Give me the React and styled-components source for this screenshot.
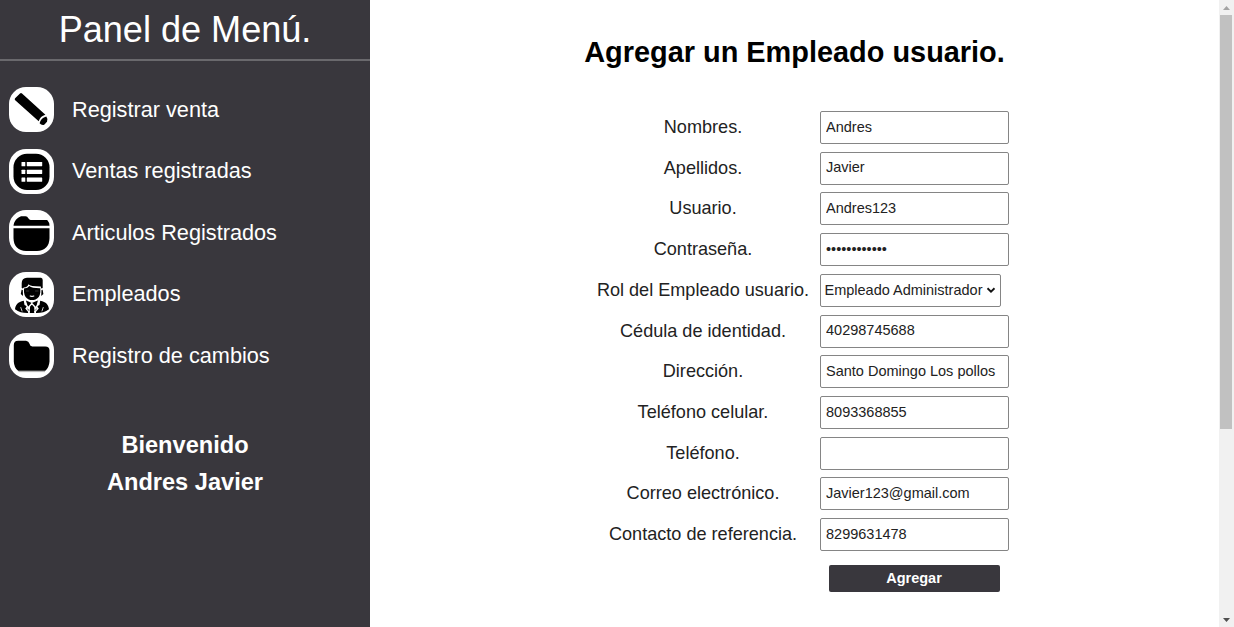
import React from "react";
import styled, { createGlobalStyle } from "styled-components";

const GlobalStyle = createGlobalStyle`
  *, *::before, *::after { box-sizing: border-box; }
  body {
    margin: 0;
    overflow: hidden;
    background: #fff;
    font-family: "Liberation Sans", Arial, sans-serif;
  }
`;

const Page = styled.div`
  display: flex;
  height: 627px;
  overflow: hidden;
`;

const Sidebar = styled.aside`
  flex: 0 0 370px;
  background: #39373d;
  color: #fff;
`;

const PanelTitle = styled.h1`
  display: flex;
  align-items: center;
  justify-content: center;
  height: 61px;
  margin: 0;
  padding-bottom: 0;
  border-bottom: 2px solid #6a696d;
  font-size: 36.1px;
  font-weight: 400;
  white-space: nowrap;
`;

const Menu = styled.nav`
  display: flex;
  flex-direction: column;
  gap: 16.5px;
  padding: 26px 0 0 9px;
`;

const MenuItem = styled.a`
  display: flex;
  align-items: center;
  gap: 18px;
  height: 45px;
  font-size: 21.7px;
  white-space: nowrap;
`;

const IconTile = styled.span`
  flex: 0 0 45px;
  height: 45px;
  border-radius: 17px;
  background: #fff;
  overflow: hidden;

  svg { display: block; width: 45px; height: 45px; }
`;

const Welcome = styled.div`
  margin-top: 49px;
  font-size: 23.6px;
  font-weight: 700;
  line-height: 37px;
  text-align: center;
`;

const Main = styled.main`
  flex: 1;
  display: flex;
  flex-direction: column;
  align-items: center;
  color: #000;
`;

const Heading = styled.h2`
  margin: 34px 0 0;
  font-size: 28.9px;
  line-height: 36px;
  white-space: nowrap;
`;

const Form = styled.form`
  display: grid;
  grid-template-columns: 218px 189px;
  grid-auto-rows: 32.5px;
  column-gap: 8px;
  row-gap: 8.22px;
  margin: 41px 0 0 13px;
`;

const Label = styled.label`
  align-self: center;
  padding: 0.4px 0 0 1px;
  color: #222;
  font-size: 18.1px;
  text-align: center;
  white-space: nowrap;
`;

const Input = styled.input`
  width: 189px;
  height: 33px;
  margin: 0;
  padding: 0 5px 2px 5.5px;
  border: 1px solid #858585;
  border-radius: 2px;
  outline: none;
  background: #fff;
  color: #222;
  font: 14.5px "Liberation Sans", Arial, sans-serif;
`;

const SelectBox = styled.div`
  display: flex;
  align-items: center;
  justify-content: space-between;
  width: 181px;
  height: 33px;
  padding: 0 4px;
  border: 1px solid #858585;
  border-radius: 2px;
  color: #222;
  font-size: 14.5px;
  white-space: nowrap;
`;

const Submit = styled.button`
  grid-column: 2;
  justify-self: center;
  width: 171px;
  height: 27px;
  margin-top: 5.8px;
  padding: 0;
  border: 0;
  border-radius: 2px;
  background: #39373d;
  color: #fff;
  font: 700 14.5px "Liberation Sans", Arial, sans-serif;
`;

const ScrollTrack = styled.div`
  flex: 0 0 15px;
  display: flex;
  flex-direction: column;
  align-items: center;
  background: #f1f1f1;
`;

const Arrow = styled.svg`
  width: 15px;
  height: 15px;
  fill: ${(p) => p.$color};
`;

const ScrollThumb = styled.div`
  width: 12px;
  height: 414px;
  margin: 0 1px auto 0;
  background: #c1c1c1;
`;

const Pencil = () => (
  <svg viewBox="0 0 45 45">
    <path d="M6.1 11.2 L11 6.5 Q12 5.7 13 6.5 L36.4 27.8 Q31.2 29.2 29.7 34.2 L6.2 13.2 Q5.2 12.2 6.1 11.2Z" />
    <path d="M37.3 29.6 Q39.2 32 38 34.7 L35.2 37.7 Q32.6 38.6 30.6 36.2 Q32 31 37.3 29.6Z" />
  </svg>
);

const List = () => (
  <svg viewBox="0 0 45 45">
    <rect x="4.5" y="4.7" width="36" height="36.3" rx="13.5" />
    <g fill="#fff">
      {[13, 20.7, 28.5].map((y) => (
        <React.Fragment key={y}>
          <rect x="12.5" y={y} width="3.8" height="4.2" rx="0.5" />
          <rect x="17.8" y={y} width="15.4" height="4.2" rx="0.4" />
        </React.Fragment>
      ))}
    </g>
  </svg>
);

const OpenFolder = () => (
  <svg viewBox="0 0 45 45">
    <path d="M4.5 15.8 C5 11.2 8 7.6 12 6.2 H16.5 C19.4 6.2 19.2 9.9 21.8 9.9 H38.2 Q40.4 12 40.5 15.8Z" />
    <path d="M4.5 18.2 H40.5 V28 C40.5 36 35.5 41 28 41 H17 C9.5 41 4.5 36 4.5 28Z" />
  </svg>
);

const Person = () => (
  <svg viewBox="0 0 45 45">
    <path d="M12.7 16 V11.2 Q12.7 6 18 5.7 H32 Q33.7 6 33.7 8 V16 Q31.8 17.5 31.8 14.4 Q21 14.4 19.5 12.2 Q18.8 15 14.8 15.6 Q14 17 12.7 16Z" />
    <path d="M15 16.5 Q19 16 20.3 14 Q23 16.3 31.3 16.2 V20.2 Q30.8 25.6 26.5 27.4 Q23.1 28.7 19.7 27.4 Q15.6 25.6 15 20.2Z" />
    <path d="M12.6 17.7 L11.8 22 L14 24 L13.8 18Z M33.6 17.7 L34.4 22 L32.2 24 L32.5 18Z" />
    <path d="M17 28.5 L22.8 31 L28.8 28.5 L27 39 H19Z" />
    <path d="M14.8 28.8 C8.7 30 6.5 33 6 37.2 Q12 41.5 20 41 L16.2 36.5 L18 34.2 L15.5 33Z M31.2 28.8 C37.3 30 39.5 33 40 37.2 Q34 41.5 26 41 L29.8 36.5 L28 34.2 L30.5 33Z" />
    <path d="M21 32 H25 L24.4 34.3 L25.4 41 H20.6 L21.6 34.3Z" />
    <g fill="none" stroke="#fff" strokeLinecap="round">
      <path d="M21.2 24 Q23 24.8 24.8 24" strokeWidth="1.2" />
      <path d="M17.2 19 H19.8 M26.5 19 H29.2" strokeWidth="0.6" stroke="#555" />
      <path d="M16.5 30.5 L19 36 L22.8 31.5 L27 36 L29.5 30.5 M20.4 35 L19.8 41 M25.8 35 L26.4 41" strokeWidth="1.4" />
      <path d="M11.8 35.5 L13 39 M34.2 35.5 L33 39" strokeWidth="0.8" />
    </g>
  </svg>
);

const Folder = () => (
  <svg viewBox="0 0 45 45">
    <path d="M4.8 12 Q4.8 7.8 9.2 7.7 H17 Q19.8 8 20.5 10.8 Q21 13.4 23.3 13.5 H36.3 Q40.5 13.7 40.5 17.5 V28.5 Q40 34.8 36.3 37.8 H9.1 Q5 34.5 4.8 28.5Z" />
    <path d="M9.5 38.6 H36" fill="none" stroke="#777" strokeWidth="0.6" />
  </svg>
);

const menu = [
  ["Registrar venta", Pencil],
  ["Ventas registradas", List],
  ["Articulos Registrados", OpenFolder],
  ["Empleados", Person],
  ["Registro de cambios", Folder],
];

const fields = [
  { label: "Nombres.", value: "Andres" },
  { label: "Apellidos.", value: "Javier" },
  { label: "Usuario.", value: "Andres123" },
  { label: "Contraseña.", value: "Andres123456", type: "password" },
  { label: "Rol del Empleado usuario.", value: "Empleado Administrador", type: "select" },
  { label: "Cédula de identidad.", value: "40298745688" },
  { label: "Dirección.", value: "Santo Domingo Los pollos" },
  { label: "Teléfono celular.", value: "8093368855" },
  { label: "Teléfono.", value: "" },
  { label: "Correo electrónico.", value: "Javier123@gmail.com" },
  { label: "Contacto de referencia.", value: "8299631478" },
];

export default function App() {
  return (
    <Page>
      <GlobalStyle />
      <Sidebar>
        <PanelTitle>Panel de Menú.</PanelTitle>
        <Menu>
          {menu.map(([text, Icon]) => (
            <MenuItem key={text}>
              <IconTile><Icon /></IconTile>
              {text}
            </MenuItem>
          ))}
        </Menu>
        <Welcome>
          <div>Bienvenido</div>
          <div>Andres Javier</div>
        </Welcome>
      </Sidebar>
      <Main>
        <Heading>Agregar un Empleado usuario.</Heading>
        <Form>
          {fields.map(({ label, value, type }) => (
            <React.Fragment key={label}>
              <Label>{label}</Label>
              {type === "select" ? (
                <SelectBox>
                  {value}
                  <svg width="10" height="8" viewBox="0 0 10 8">
                    <path d="M1.5 2.3 L5 5.6 L8.5 2.3" fill="none" stroke="#111" strokeWidth="1.9" />
                  </svg>
                </SelectBox>
              ) : (
                <Input type={type || "text"} defaultValue={value} />
              )}
            </React.Fragment>
          ))}
          <Submit type="button">Agregar</Submit>
        </Form>
      </Main>
      <ScrollTrack>
        <Arrow $color="#a3a3a3" viewBox="0 0 15 15"><path d="M4 10 L7.5 6 L11 10Z" /></Arrow>
        <ScrollThumb />
        <Arrow $color="#505050" viewBox="0 0 15 15"><path d="M4 6 L7.5 10 L11 6Z" /></Arrow>
      </ScrollTrack>
    </Page>
  );
}
